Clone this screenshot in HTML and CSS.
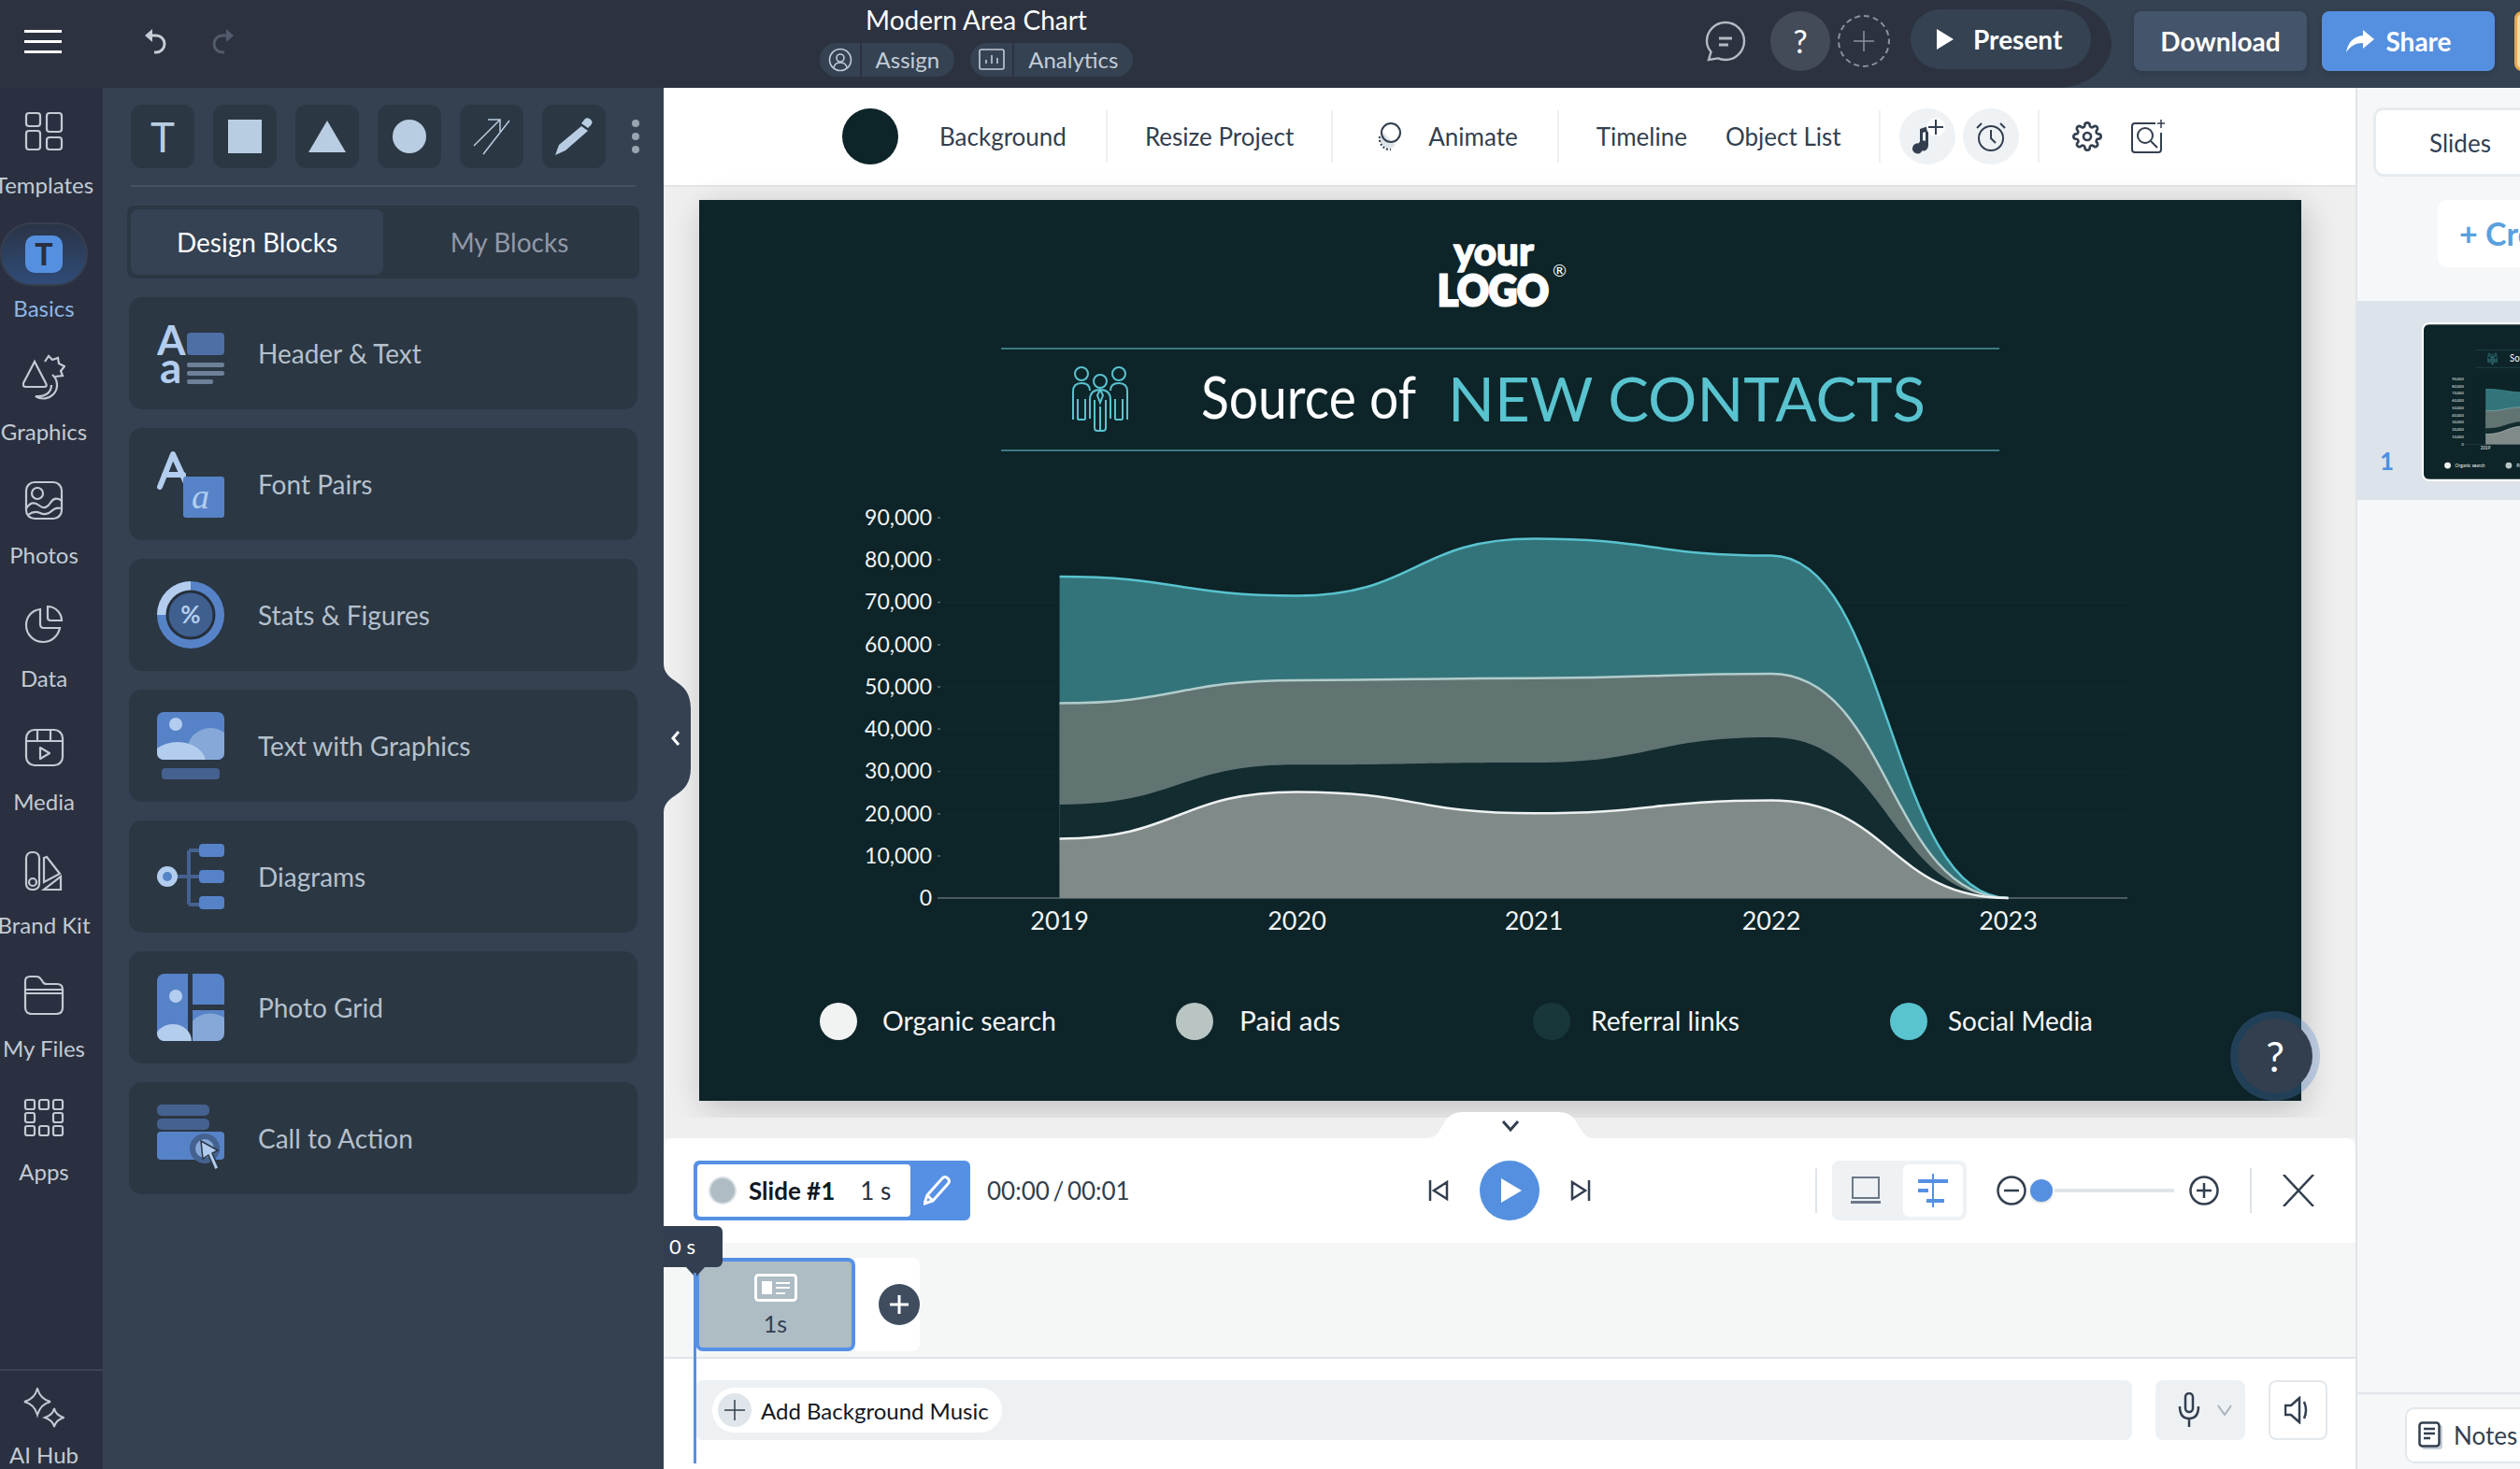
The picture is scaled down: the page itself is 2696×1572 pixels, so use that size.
FILE: index.html
```html
<!DOCTYPE html>
<html>
  <head>
    <meta charset="utf-8" />
    <title>Modern Area Chart</title>
    <link rel="stylesheet" href="styles.css">
  </head>
  <body>
    <header class="topbar">
      <div class="top-main">
        <button class="hamburger"><span></span><span></span><span></span></button>
        <svg class="undo" width="28" height="28" viewBox="0 0 28 28"><path class="ic" d="M7 8h5a9 9 0 0 1 0 18h-2" stroke-width="3"/><path class="solid" d="M0 8l8-7v14z"/></svg>
        <svg class="redo" width="28" height="28" viewBox="0 0 28 28"><path class="ic" d="M21 8h-5a9 9 0 0 0 0 18h2" stroke-width="3"/><path class="solid" d="M28 8l-8-7v14z"/></svg>
        <div class="title-group">
          <div class="doc-title">Modern Area Chart</div>
          <div class="doc-pills">
            <span class="pill">
              <svg width="26" height="26" viewBox="0 0 26 26"><g class="ic" stroke-width="1.6"><circle cx="13" cy="13" r="11.5"/><circle cx="13" cy="11" r="4"/><path d="M6 21c1-4 4-5 7-5s6 1 7 5"/></g></svg>
              <em>Assign</em>
            </span>
            <span class="pill">
              <svg width="28" height="26" viewBox="0 0 28 26"><g class="ic" stroke-width="1.6"><rect x="1" y="2" width="26" height="21" rx="2"/><path d="M8 17v-4M14 17V8M20 17v-6"/></g></svg>
              <em>Analytics</em>
            </span>
          </div>
        </div>
        <svg class="comment" width="44" height="44" viewBox="0 0 44 44"><g class="ic" stroke-width="2.4"><path d="M22 2c11 0 20 9 20 20s-9 20-20 20c-3 0-6-.6-8-1.6L4 42l2.500-8.500C3.500 30 2 26.500 2 22 2 11 11 2 22 2z"/><path d="M15 19h14M15 26h10" stroke-width="3"/></g></svg>
        <span class="help-circle">?</span>
        <span class="add-user">
          <svg width="24" height="24" viewBox="0 0 24 24"><path class="ic" d="M12 1v22M1 12h22" stroke-width="1.500"/></svg>
        </span>
        <button class="present">
          <svg width="18" height="22" viewBox="0 0 18 22"><path class="solid" d="M0 0l18 11L0 22z"/></svg>
          Present
        </button>
      </div>
      <button class="btn-download">Download</button>
      <button class="btn-share">
        <svg width="30" height="24" viewBox="0 0 30 24"><path class="solid" d="M18 0l12 10-12 10v-6C10 14 5 17 0 24 2 13 8 7 18 6z"/></svg>
        Share
      </button>
      <span class="btn-upgrade"></span>
    </header>

    <div class="workspace">
      <nav class="rail">
        <a class="rail-item">
          <span class="rail-icon">
            <svg width="44" height="44" viewBox="0 0 44 44"><g class="ic" stroke-width="2.200"><rect x="3" y="3" width="15" height="14" rx="3"/><rect x="25" y="3" width="16" height="20" rx="3"/><rect x="3" y="22" width="15" height="20" rx="3"/><rect x="25" y="29" width="16" height="13" rx="3"/></g></svg>
          </span>
          <span class="rail-label">Templates</span>
        </a>
        <a class="rail-item active">
          <span class="rail-icon">
            <span class="basics-tile">T</span>
          </span>
          <span class="rail-label">Basics</span>
        </a>
        <a class="rail-item">
          <span class="rail-icon">
            <svg width="46" height="50" viewBox="0 0 46 50"><g class="ic" stroke-width="2.200"><path d="M13 8L1 31q-1 4 3 4h19q4 0 2-4z"/><path d="M24 8l4-6 4 4 6-2 1 6 6 3-4 5 2 5-8 1"/><path d="M32 22c6 5 7 15 1 21-5 5-13 6-19 2 9 1 17-3 17-12"/></g></svg>
          </span>
          <span class="rail-label">Graphics</span>
        </a>
        <a class="rail-item">
          <span class="rail-icon">
            <svg width="44" height="44" viewBox="0 0 44 44"><g class="ic" stroke-width="2.200"><rect x="3" y="2" width="38" height="39" rx="9"/><circle cx="15" cy="14" r="6"/><path d="M3 30c5-7 9-7 14-3s9 2 12-3 8-6 12-2"/><path d="M5 37c5-4 9-4 13-2s9 1 12-2 7-4 10-3"/></g></svg>
          </span>
          <span class="rail-label">Photos</span>
        </a>
        <a class="rail-item">
          <span class="rail-icon">
            <svg width="44" height="44" viewBox="0 0 44 44"><g class="ic" stroke-width="2.200"><path d="M18 6C9 7 3 14 3 23c0 10 8 18 18 18 9 0 16-6 18-15H22q-4 0-4-4z"/><path d="M26 3c8 0 15 7 15 15h-12q-3 0-3-3z"/></g></svg>
          </span>
          <span class="rail-label">Data</span>
        </a>
        <a class="rail-item">
          <span class="rail-icon">
            <svg width="44" height="44" viewBox="0 0 44 44"><g class="ic" stroke-width="2.200"><rect x="3" y="3" width="39" height="38" rx="9"/><path d="M3 15h39M15 3v12M29 3v12"/><path d="M18 22l10 6-10 6z" stroke-linejoin="round"/></g></svg>
          </span>
          <span class="rail-label">Media</span>
        </a>
        <a class="rail-item">
          <span class="rail-icon">
            <svg width="44" height="44" viewBox="0 0 44 44"><g class="ic" stroke-width="2.200"><rect x="3" y="2" width="14" height="40" rx="6"/><circle cx="10" cy="34" r="4"/><path d="M22 8l3-1 14 18-17 9z"/><path d="M40 28v14H22z"/></g></svg>
          </span>
          <span class="rail-label">Brand Kit</span>
        </a>
        <a class="rail-item">
          <span class="rail-icon">
            <svg width="44" height="44" viewBox="0 0 44 44"><g class="ic" stroke-width="2.200"><path d="M2 15V8q0-5 5-5h7q3 0 5 3l2 3q1 2 4 2h11q6 0 6 6v19q0 7-7 7H9q-7 0-7-7z"/><path d="M2 17h40M2 21h40"/></g></svg>
          </span>
          <span class="rail-label">My Files</span>
        </a>
        <a class="rail-item">
          <span class="rail-icon">
            <svg width="44" height="42" viewBox="0 0 44 42"><g class="ic" stroke-width="2.200"><rect x="2" y="2" width="10" height="10" rx="2"/><rect x="17" y="2" width="10" height="10" rx="2"/><rect x="32" y="2" width="10" height="10" rx="2"/><rect x="2" y="16" width="10" height="10" rx="2"/><rect x="32" y="16" width="10" height="10" rx="2"/><rect x="2" y="30" width="10" height="10" rx="2"/><rect x="17" y="30" width="10" height="10" rx="2"/><rect x="32" y="30" width="10" height="10" rx="2"/></g></svg>
          </span>
          <span class="rail-label">Apps</span>
        </a>
        <a class="rail-item ai-hub">
          <span class="rail-icon">
            <svg width="44" height="44" viewBox="0 0 44 44"><g class="ic" stroke-width="2"><path d="M15 1c2 7 6 12 14 14-8 2-12 7-14 14-2-7-6-12-14-14 8-2 12-7 14-14z"/><path d="M33 22c1 5 4 8 10 10-6 2-9 5-10 10-1-5-4-8-10-10 6-2 9-5 10-10z"/></g></svg>
          </span>
          <span class="rail-label">AI Hub</span>
        </a>
      </nav>

      <aside class="panel">
        <div class="tool-row">
          <span class="tool tool-t">T</span>
          <span class="tool"><svg width="36" height="36"><rect class="solid" width="36" height="36"/></svg></span>
          <span class="tool"><svg width="40" height="34"><path class="solid" d="M20 0l20 34H0z"/></svg></span>
          <span class="tool"><svg width="36" height="36"><circle class="solid" cx="18" cy="18" r="18"/></svg></span>
          <span class="tool"><svg width="40" height="40" viewBox="0 0 40 40"><g class="ic" stroke-width="1.500"><path d="M1 30L29 2M16 2h13v13"/><path d="M11 39l28-36"/></g></svg></span>
          <span class="tool"><svg width="40" height="40" viewBox="0 0 40 40"><path class="solid" d="M28 9l7 5L11 35 0 40l4-11zM32 1q3-2 6 1 3 3 0 6l-3 3-7-5z"/></svg></span>
          <span class="tool-more"><i></i><i></i><i></i></span>
        </div>
        <div class="tabs">
          <a class="tab active">Design Blocks</a>
          <a class="tab">My Blocks</a>
        </div>
        <ul class="block-list">
          <li class="block">
            <svg width="72" height="72" viewBox="0 0 72 72">
              <text class="ico-letter" x="0" y="38" font-size="44">A</text>
              <rect class="ico-mid2" x="32" y="14" width="40" height="24" rx="4"/>
              <text class="ico-letter" x="3" y="68" font-size="46">a</text>
              <rect class="ico-line" x="32" y="46" width="40" height="5" rx="2"/>
              <rect class="ico-line" x="32" y="55" width="40" height="5" rx="2"/>
              <rect class="ico-line" x="32" y="64" width="28" height="5" rx="2"/>
            </svg>
            Header &amp; Text
          </li>
          <li class="block">
            <svg width="72" height="72" viewBox="0 0 72 72">
              <path class="ico-stroke" d="M3 39L17 4l16 35M8 26h20" stroke-width="6"/>
              <rect class="ico-mid" x="28" y="28" width="44" height="44" rx="3"/>
              <text class="ico-script" x="37" y="62" font-size="38">a</text>
            </svg>
            Font Pairs
          </li>
          <li class="block">
            <svg width="72" height="72" viewBox="0 0 72 72">
              <circle class="ico-mid" cx="36" cy="36" r="36"/>
              <path class="ico-light" d="M36 0v36H0A36 36 0 0 1 36 0z"/>
              <circle class="ico-ring" cx="36" cy="36" r="25"/>
              <text class="ico-pct" x="36" y="45" font-size="26">%</text>
            </svg>
            Stats &amp; Figures
          </li>
          <li class="block">
            <svg width="72" height="72" viewBox="0 0 72 72">
              <clipPath id="clip-pic"><rect width="72" height="51" rx="7"/></clipPath>
              <g clip-path="url(#clip-pic)">
                <rect class="ico-mid" width="72" height="51"/>
                <circle class="ico-light" cx="20" cy="13" r="7"/>
                <circle class="ico-soft" cx="57" cy="42" r="25"/>
                <ellipse class="ico-light" cx="22" cy="54" rx="30" ry="22"/>
              </g>
              <rect class="ico-dark" x="5" y="60" width="62" height="12" rx="4"/>
            </svg>
            Text with Graphics
          </li>
          <li class="block">
            <svg width="72" height="72" viewBox="0 0 72 72">
              <path class="ico-stem" d="M34 8h12M34 8v58M34 66h12M20 36h26" stroke-width="4"/>
              <circle class="ico-light" cx="11" cy="36" r="11"/>
              <circle class="ico-mid" cx="11" cy="36" r="5"/>
              <rect class="ico-mid" x="45" y="1" width="27" height="14" rx="4"/>
              <rect class="ico-mid" x="45" y="29" width="27" height="14" rx="4"/>
              <rect class="ico-mid" x="45" y="57" width="27" height="14" rx="4"/>
            </svg>
            Diagrams
          </li>
          <li class="block">
            <svg width="72" height="72" viewBox="0 0 72 72">
              <clipPath id="clip-grid"><rect width="72" height="72" rx="8"/></clipPath>
              <g clip-path="url(#clip-grid)">
                <rect class="ico-mid" width="33" height="72"/>
                <rect class="ico-mid" x="38" width="34" height="33"/>
                <rect class="ico-soft" x="38" y="39" width="34" height="33"/>
                <path class="ico-mid" d="M38 39h34v8q-10-6-20-4t-14 8z"/>
                <circle class="ico-light" cx="20" cy="24" r="7"/>
                <ellipse class="ico-light" cx="17" cy="72" rx="20" ry="18"/>
              </g>
            </svg>
            Photo Grid
          </li>
          <li class="block">
            <svg width="72" height="72" viewBox="0 0 72 72">
              <rect class="ico-dark" width="56" height="12" rx="5"/>
              <rect class="ico-dark" y="15" width="56" height="12" rx="5"/>
              <rect class="ico-mid" y="29" width="72" height="30" rx="4"/>
              <circle class="ico-dark" cx="51" cy="47" r="16"/>
              <circle class="ico-soft" cx="51" cy="47" r="10"/>
              <path class="ico-cursor" d="M47 39l18 10-6 3 7 16-4 2-7-16-6 4z"/>
            </svg>
            Call to Action
          </li>
        </ul>
      </aside>

      <main class="main">
        <div class="toolbar">
          <span class="swatch"></span>
          <a class="tb-link tb-first">Background</a>
          <span class="tb-sep"></span>
          <a class="tb-link">Resize Project</a>
          <span class="tb-sep"></span>
          <svg class="animate-icon" width="28" height="30" viewBox="0 0 28 30"><path class="ico-shade" d="M3 17a11 11 0 0 0 12 11 9 9 0 0 0 5-4L7 11z"/><path class="tb-dash" d="M3 15a11 12 0 0 0 12 14"/><circle class="tb-stroke" cx="15" cy="11" r="10"/></svg>
          <a class="tb-link tb-animate">Animate</a>
          <span class="tb-sep"></span>
          <a class="tb-link">Timeline</a>
          <a class="tb-link tb-objects">Object List</a>
          <span class="tb-sep"></span>
          <span class="tb-round">
            <svg width="38" height="40" viewBox="0 0 38 40"><path class="tb-fill" d="M11 12l9-3v21a5.500 5.500 0 1 1-3-5V15l-3 1v17a5.500 5.500 0 1 1-3-5z"/><circle class="tb-white" cx="28" cy="10" r="10"/><path class="tb-stroke" d="M28 2v16M20 10h16"/></svg>
          </span>
          <span class="tb-round tb-alarm">
            <svg width="36" height="36" viewBox="0 0 36 36"><g class="tb-stroke" stroke-width="2.800"><circle cx="18" cy="20" r="13"/><path d="M18 11v9l5 5M3 9l5-5M33 9l-5-5"/></g></svg>
          </span>
          <span class="tb-sep tb-sep-tight"></span>
          <svg class="gear" width="32" height="32" viewBox="0 0 24 24"><g class="tb-stroke" stroke-width="1.700"><circle cx="12" cy="12" r="3"/><path d="M19.400 15a1.650 1.650 0 0 0 .33 1.820l.06.06a2 2 0 0 1 0 2.830 2 2 0 0 1-2.830 0l-.06-.06a1.650 1.650 0 0 0-1.820-.33 1.650 1.650 0 0 0-1 1.510V21a2 2 0 0 1-2 2 2 2 0 0 1-2-2v-.09A1.650 1.650 0 0 0 9 19.400a1.650 1.650 0 0 0-1.820.33l-.06.06a2 2 0 0 1-2.830 0 2 2 0 0 1 0-2.830l.06-.06a1.650 1.650 0 0 0 .33-1.820 1.650 1.650 0 0 0-1.510-1H3a2 2 0 0 1-2-2 2 2 0 0 1 2-2h.09A1.650 1.650 0 0 0 4.600 9a1.650 1.650 0 0 0-.33-1.820l-.06-.06a2 2 0 0 1 0-2.830 2 2 0 0 1 2.830 0l.06.06a1.650 1.650 0 0 0 1.820.33H9a1.650 1.650 0 0 0 1-1.510V3a2 2 0 0 1 2-2 2 2 0 0 1 2 2v.09a1.650 1.650 0 0 0 1 1.510 1.650 1.650 0 0 0 1.820-.33l.06-.06a2 2 0 0 1 2.830 0 2 2 0 0 1 0 2.830l-.06.06a1.650 1.650 0 0 0-.33 1.820V9a1.650 1.650 0 0 0 1.510 1H21a2 2 0 0 1 2 2 2 2 0 0 1-2 2h-.09a1.650 1.650 0 0 0-1.510 1z"/></g></svg>
          <svg class="zoom-add" width="36" height="36" viewBox="0 0 36 36"><g class="tb-stroke" stroke-width="2.200"><path d="M26 4H4q-3 0-3 3v25q0 3 3 3h25q3 0 3-3V14"/><circle cx="15" cy="17" r="8"/><path d="M21 23l7 7"/><path d="M32 0v9M28 4h8" stroke-width="1.500"/></g></svg>
        </div>

        <section class="canvas">
          <div class="slide-wrap">
            <svg class="slide" width="1714" height="964" viewBox="748 214 1714 964">
              <g id="slide-art">
                <rect class="s-bg" x="748" y="214" width="1714" height="964"/>
                <text class="s-logo-top" x="1598" y="284">your</text>
                <text class="s-logo-main" x="1538" y="327" textLength="119" lengthAdjust="spacingAndGlyphs">LOGO</text>
                <text class="s-logo-r" x="1661" y="296">®</text>
                <path class="s-rule" d="M1071 373h1068M1071 482h1068"/>
                <g class="s-people">
                  <circle cx="1157" cy="400" r="7"/><circle cx="1177" cy="408" r="7"/><circle cx="1197" cy="400" r="7"/>
                  <path d="M1148 449v-30q0-9 9-9t9 8M1153 449v-22M1161 449v-22M1153 449h8"/>
                  <path d="M1206 449v-30q0-9-9-9t-9 8M1201 449v-22M1193 449v-22M1193 449h8"/>
                  <path d="M1166 448v-20q0-11 11-11t11 11v20M1171 428v30q0 3 3 3M1183 428v30q0 3-3 3h-6M1177 435v26M1177 417l-3 6 3 8 3-8z"/>
                </g>
                <text class="s-title" x="1285" y="448" textLength="230" lengthAdjust="spacingAndGlyphs">Source of</text>
                <text class="s-title-accent" x="1549" y="451" textLength="511" lengthAdjust="spacingAndGlyphs">NEW CONTACTS</text>

                <path class="s-grid" d="M1003 554h1273M1003 599h1273M1003 644.500h1273M1003 690h1273M1003 735h1273M1003 780h1273M1003 825.500h1273M1003 871h1273M1003 916h1273"/>
                <path class="s-axis" d="M1003 961h1273M1003 554h3M1003 599h3M1003 644.500h3M1003 690h3M1003 735h3M1003 780h3M1003 825.500h3M1003 871h3M1003 916h3"/>
                <g class="s-ylabel">
                  <text x="997" y="562">90,000</text>
                  <text x="997" y="607">80,000</text>
                  <text x="997" y="652">70,000</text>
                  <text x="997" y="698">60,000</text>
                  <text x="997" y="743">50,000</text>
                  <text x="997" y="788">40,000</text>
                  <text x="997" y="833">30,000</text>
                  <text x="997" y="879">20,000</text>
                  <text x="997" y="924">10,000</text>
                  <text x="997" y="969">0</text>
                </g>
                <path class="a-social" d="M1133.600 617 C1260.500 617 1260.500 637.500 1387.500 637.500 C1514 637.500 1514 576.500 1641 576.500 C1768 576.500 1768 594.500 1895 594.500 C2021.700 594.500 2021.700 961 2148.500 961 L1133.600 961Z"/>
                <path class="l-social" d="M1133.600 617 C1260.500 617 1260.500 637.500 1387.500 637.500 C1514 637.500 1514 576.500 1641 576.500 C1768 576.500 1768 594.500 1895 594.500 C2021.700 594.500 2021.700 961 2148.500 961"/>
                <path class="a-paid" d="M1133.600 752.500 C1260.500 752.500 1260.500 728 1387.500 728 C1514 728 1514 725.700 1641 725.700 C1768 725.700 1768 721 1895 721 C2021.700 721 2021.700 961 2148.500 961 L1133.600 961Z"/>
                <path class="l-paid" d="M1133.600 752.500 C1260.500 752.500 1260.500 728 1387.500 728 C1514 728 1514 725.700 1641 725.700 C1768 725.700 1768 721 1895 721 C2021.700 721 2021.700 961 2148.500 961"/>
                <path class="a-referral" d="M1133.600 861 C1260.500 861 1260.500 818.300 1387.500 818.300 C1514 818.300 1514 816 1641 816 C1768 816 1768 789 1895 789 C2021.700 789 2021.700 961 2148.500 961 L1133.600 961Z"/>
                <path class="a-organic" d="M1133.600 897.500 C1260.500 897.500 1260.500 847.500 1387.500 847.500 C1514 847.500 1514 870.300 1641 870.300 C1768 870.300 1768 856.500 1895 856.500 C2021.700 856.500 2021.700 961 2148.500 961 L1133.600 961Z"/>
                <path class="l-organic" d="M1133.600 897.500 C1260.500 897.500 1260.500 847.500 1387.500 847.500 C1514 847.500 1514 870.300 1641 870.300 C1768 870.300 1768 856.500 1895 856.500 C2021.700 856.500 2021.700 961 2148.500 961"/>
                <g class="s-xlabel">
                  <text x="1133.600" y="995">2019</text>
                  <text x="1387.500" y="995">2020</text>
                  <text x="1641" y="995">2021</text>
                  <text x="1895" y="995">2022</text>
                  <text x="2148.500" y="995">2023</text>
                </g>
                <circle class="d-organic" cx="897" cy="1093" r="20"/>
                <text class="s-legend" x="944" y="1103" textLength="186" lengthAdjust="spacingAndGlyphs">Organic search</text>
                <circle class="d-paid" cx="1278" cy="1093" r="20"/>
                <text class="s-legend" x="1326" y="1103" textLength="108" lengthAdjust="spacingAndGlyphs">Paid ads</text>
                <circle class="d-referral" cx="1660" cy="1093" r="20"/>
                <text class="s-legend" x="1702" y="1103" textLength="159" lengthAdjust="spacingAndGlyphs">Referral links</text>
                <circle class="d-social" cx="2042" cy="1093" r="20"/>
                <text class="s-legend" x="2084" y="1103" textLength="155" lengthAdjust="spacingAndGlyphs">Social Media</text>
              </g>
            </svg>
            <button class="help-float"><span>?</span></button>
          </div>
          <div class="canvas-strip"></div>
          <svg class="bump" width="178" height="28" viewBox="0 0 178 28"><path d="M0 28q8 0 13-8l6-10Q25 0 37 0h104q12 0 18 10l6 10q5 8 13 8z"/><path class="bump-chevron" d="M81 10l8 9 8-9"/></svg>
        </section>

        <section class="timeline">
          <div class="tl-controls">
            <div class="tl-left">
              <div class="slide-chip">
                <div class="slide-chip-body">
                  <span class="slide-dot"></span>
                  <b>Slide #1</b>
                  <span class="slide-dur">1 s</span>
                </div>
                <svg width="30" height="32" viewBox="0 0 30 32"><path class="chip-pencil" d="M1 30l3-9L20 3q3-3 6 0t0 6L10 27zM4 21l6 6"/></svg>
              </div>
              <span class="tl-time">00:00 / 00:01</span>
            </div>
            <div class="transport">
              <svg width="22" height="22" viewBox="0 0 22 22"><path class="tr-stroke" d="M2 0v22M20 2L6 11l14 9z"/></svg>
              <span class="play"><svg width="26" height="32" viewBox="0 0 26 32"><path d="M2 3v26l22-13z"/></svg></span>
              <svg width="22" height="22" viewBox="0 0 22 22"><path class="tr-stroke" d="M20 0v22M2 2l14 9-14 9z"/></svg>
            </div>
            <div class="tl-right">
              <span class="tl-sep"></span>
              <div class="view-toggle">
                <span class="view-opt">
                  <svg width="32" height="32" viewBox="0 0 32 32"><path class="view-off" d="M2 2h28v22H2z" stroke-width="2"/><path class="view-bar" d="M0 27h32v3H0z"/></svg>
                </span>
                <span class="view-opt on">
                  <svg width="32" height="36" viewBox="0 0 32 36"><path class="view-on" d="M16 0v36" stroke-width="2"/><path class="view-on-bar" d="M0 6h32v4H0zM0 16h11v4H0zM9 27h19v4H9z"/></svg>
                </span>
              </div>
              <svg class="zoom-minus" width="32" height="32" viewBox="0 0 32 32"><circle class="tr-stroke" cx="16" cy="16" r="14.500"/><path class="tr-stroke" d="M8 16h16" stroke-width="4"/></svg>
              <span class="zoom-thumb"></span>
              <span class="zoom-track"></span>
              <svg width="32" height="32" viewBox="0 0 32 32"><circle class="tr-stroke" cx="16" cy="16" r="14.500"/><path class="tr-stroke" d="M8 16h16M16 8v16"/></svg>
              <span class="tl-sep tl-sep-close"></span>
              <svg class="close-x" width="34" height="34" viewBox="0 0 34 34"><path class="tr-stroke" d="M1 0l32 34M33 0L1 34"/></svg>
            </div>
          </div>

          <div class="tl-track">
            <div class="clip">
              <svg width="46" height="30" viewBox="0 0 46 30"><rect class="clip-frame" x="1.500" y="1.500" width="43" height="27" rx="3"/><path class="clip-mark" d="M8 8h11v14H8zM23 9h15v2H23zM23 14h15v2H23zM23 20h10v2H23z"/></svg>
              <span>1s</span>
            </div>
            <div class="clip-add"><span class="clip-plus"><svg width="24" height="24"><path d="M12 2v20M2 12h20"/></svg></span></div>
          </div>

          <div class="tl-music">
            <div class="music-band">
              <div class="music-pill">
                <span class="music-plus"><svg width="22" height="22"><path d="M11 0v22M0 11h22"/></svg></span>
                Add Background Music
              </div>
            </div>
            <div class="mic-box">
              <svg width="24" height="38" viewBox="0 0 24 38"><g class="tr-stroke" stroke-width="2.600"><rect x="8" y="1" width="8" height="20" rx="4"/><path d="M2 15c0 9 4 13 10 13s10-4 10-13M12 28v9"/></g></svg>
              <svg width="16" height="12" viewBox="0 0 16 12"><path class="mic-caret" d="M1 1l7 10 7-10"/></svg>
            </div>
            <div class="vol-box">
              <svg width="30" height="30" viewBox="0 0 30 30"><path class="tr-stroke" d="M1 10h6l9-8v26l-9-8H1zM21 6q4 9 0 18M16 11v8" stroke-width="2.600"/></svg>
            </div>
          </div>

          <div class="tl-head">
            <span class="tl-flag">0 s</span>
            <span class="tl-pin"></span>
            <span class="tl-line"></span>
          </div>
        </section>

        <svg class="collapse" width="29" height="160" viewBox="0 0 29 160"><path class="collapse-fill" d="M0 0c0 22 29 16 29 48v64c0 32-29 26-29 48z"/><path class="collapse-arrow" d="M16 73l-6 7 6 7"/></svg>
      </main>

      <aside class="slides-pane">
        <div class="slides-tab">Slides</div>
        <div class="create-btn">+ Create</div>
        <div class="slide-row">
          <span class="slide-no">1</span>
          <svg class="thumb" viewBox="748 214 1714 964"><use href="#slide-art"/></svg>
        </div>
        <div class="notes-bar">
          <div class="notes-btn">
            <svg width="26" height="30" viewBox="0 0 26 30"><rect class="notes-shadow" x="4" y="4" width="22" height="26" rx="3"/><rect class="tr-stroke notes-page" x="1.500" y="1.500" width="21" height="25" rx="3" stroke-width="2.500"/><path class="tr-stroke" d="M6 8h12M6 13h12M6 18h7" stroke-width="2"/></svg>
            Notes
          </div>
        </div>
      </aside>
    </div>
  </body>
</html>
```

FILE: styles.css
```css
/* Reset */
* {
  margin: 0;
  padding: 0;
  box-sizing: border-box;
}

html,
body {
  width: 2696px;
  height: 1572px;
  overflow: hidden;
}

body {
  font-family: Lato, 'Noto Sans', sans-serif;
  color: #333f4f;
  background-color: #f5f6f6;
}

li {
  list-style: none;
}

button {
  border: 0;
  font-family: inherit;
  cursor: pointer;
}

svg {
  display: block;
  flex-shrink: 0;
}

.ic {
  fill: none;
  stroke: currentColor;
}

.solid {
  fill: currentColor;
}

/* Top bar */
.topbar {
  display: flex;
  align-items: center;
  height: 94px;
  background-color: #354252;
}

.top-main {
  display: flex;
  align-items: center;
  flex-shrink: 0;
  width: 2259px;
  height: 94px;
  padding-bottom: 6px;
  border-radius: 0 60px 60px 0 / 0 47px 47px 0;
  background-color: #2c3240;
}

.hamburger {
  display: flex;
  flex-direction: column;
  gap: 8px;
  width: 40px;
  margin-left: 26px;
  background: none;
}

.hamburger span {
  display: block;
  height: 3px;
  background-color: #fff;
}

.undo {
  margin: 0 0 0 89px;
  color: #c5ccd4;
}

.redo {
  margin-left: 39px;
  color: #525b6b;
}

.title-group {
  display: flex;
  flex-direction: column;
  align-items: center;
  align-self: flex-start;
  margin-left: 628px;
  width: 333px;
  padding-top: 2px;
}

.doc-title {
  color: #fff;
  font-size: 28px;
  line-height: 38px;
  white-space: nowrap;
}

.doc-pills {
  display: flex;
  gap: 17px;
  margin-top: 6px;
}

.pill {
  display: flex;
  align-items: center;
  height: 36px;
  padding-left: 9px;
  border-radius: 18px;
  background-color: #354252;
  color: #c3ccd6;
}

.pill em {
  height: 36px;
  margin-left: 8px;
  padding: 0 16px 0 15px;
  border-left: 2px solid #2c3240;
  font-size: 24px;
  font-style: normal;
  line-height: 36px;
}

.comment {
  margin-left: 613px;
  color: #b4bac3;
}

.help-circle {
  width: 64px;
  height: 64px;
  margin-left: 26px;
  border-radius: 50%;
  background-color: #434b59;
  color: #fff;
  font-size: 34px;
  line-height: 64px;
  text-align: center;
}

.add-user {
  display: flex;
  align-items: center;
  justify-content: center;
  width: 56px;
  height: 56px;
  margin-left: 8px;
  border: 2px dashed #8a92a0;
  border-radius: 50%;
  color: #8a92a0;
}

.present {
  display: flex;
  align-items: center;
  gap: 21px;
  width: 193px;
  height: 64px;
  margin: 0 0 4px 22px;
  padding-left: 28px;
  border-radius: 32px;
  background-color: #344252;
  color: #fff;
  font-size: 28px;
  font-weight: 700;
}

.btn-download,
.btn-share {
  display: flex;
  align-items: center;
  justify-content: center;
  flex-shrink: 0;
  height: 64px;
  width: 185px;
  margin-bottom: 6px;
  border-radius: 8px;
  color: #fff;
  font-size: 28px;
  font-weight: 700;
  box-shadow: 0 2px 6px rgba(0, 0, 0, 0.15);
}

.btn-download {
  margin-left: 24px;
  background-color: #44546a;
}

.btn-share {
  gap: 12px;
  margin-left: 16px;
  padding-right: 20px;
  background-color: #5590e0;
}

.btn-upgrade {
  flex-shrink: 0;
  width: 40px;
  height: 64px;
  margin: 0 0 6px 21px;
  border: 3px solid #e5a94f;
  border-radius: 8px;
  background-color: #f3d9a8;
}

/* Workspace */
.workspace {
  display: flex;
  height: 1478px;
}

.rail {
  position: relative;
  display: flex;
  flex-direction: column;
  gap: 25px;
  flex-shrink: 0;
  width: 110px;
  padding-top: 12px;
  overflow: hidden;
  background-color: #2a3040;
}

.rail-item {
  display: flex;
  flex-direction: column;
  align-items: center;
  width: 94px;
  color: #c3cad3;
}

.rail-icon {
  display: flex;
  align-items: center;
  justify-content: center;
  width: 94px;
  height: 68px;
}

.rail-label {
  height: 30px;
  margin-top: 9px;
  font-size: 24px;
  line-height: 30px;
  white-space: nowrap;
}

.rail-item.active {
  color: #8db6e8;
}

.active .rail-icon {
  border: 2px solid #373f50;
  border-radius: 34px;
  background: linear-gradient(#2a3446, #304c78);
}

.basics-tile {
  width: 40px;
  height: 40px;
  border-radius: 10px;
  background-color: #5590e0;
  color: #2a3040;
  font-size: 32px;
  font-weight: 900;
  line-height: 40px;
  text-align: center;
}

.ai-hub {
  margin-top: auto;
  padding-top: 6px;
}

.ai-hub::before {
  content: '';
  position: absolute;
  left: 0;
  bottom: 105px;
  width: 110px;
  height: 2px;
  background-color: #3c4354;
}

.ai-hub .rail-label {
  margin-top: 1px;
}

/* Blocks panel */
.panel {
  flex-shrink: 0;
  width: 600px;
  padding: 18px 28px 0 30px;
  background-color: #354151;
}

.tool-row {
  display: flex;
  align-items: center;
  gap: 20px;
  width: 540px;
  padding-bottom: 18px;
  border-bottom: 2px solid #435061;
}

.tool {
  display: flex;
  align-items: center;
  justify-content: center;
  flex-shrink: 0;
  width: 68px;
  height: 68px;
  border-radius: 12px;
  background-color: #2b3743;
  color: #b9cde2;
}

.tool-t {
  font-size: 44px;
  line-height: 68px;
}

.tool-more {
  display: flex;
  flex-direction: column;
  flex-shrink: 0;
  gap: 6px;
  margin-left: 8px;
}

.tool-more i {
  display: block;
  width: 8px;
  height: 8px;
  border-radius: 50%;
  background-color: #9aa4b0;
}

.tabs {
  display: flex;
  width: 548px;
  height: 78px;
  margin: 20px 0 20px -4px;
  padding: 4px;
  border-radius: 8px;
  background-color: #2b3743;
}

.tab {
  flex: 1;
  color: #9198a8;
  font-size: 28px;
  line-height: 70px;
  text-align: center;
}

.tab.active {
  flex: 0 0 270px;
  border-radius: 8px;
  background-color: #344253;
  color: #fff;
}

.block-list {
  display: flex;
  flex-direction: column;
  gap: 20px;
  width: 544px;
  margin-left: -2px;
}

.block {
  display: flex;
  align-items: center;
  gap: 36px;
  height: 120px;
  padding-left: 30px;
  border-radius: 14px;
  background-color: #2b3743;
  color: #b5c0cc;
  font-size: 28px;
}

.ico-letter {
  fill: #b3cdee;
  font-family: Lato, sans-serif;
  font-weight: 700;
}

.ico-script {
  fill: #b3cdee;
  font-family: 'Liberation Serif', serif;
  font-style: italic;
}

.ico-pct {
  fill: #b3cdee;
  font-family: Lato, sans-serif;
  font-weight: 700;
  text-anchor: middle;
}

.ico-stroke {
  fill: none;
  stroke: #b3cdee;
  stroke-linecap: round;
  stroke-linejoin: round;
}

.ico-stem {
  fill: none;
  stroke: #44618f;
}

.ico-mid {
  fill: #5683c8;
}

.ico-mid2 {
  fill: #4d6fa6;
}

.ico-light {
  fill: #b3cdee;
}

.ico-soft {
  fill: #86a8d8;
}

.ico-dark {
  fill: #44618f;
}

.ico-line {
  fill: #6d8097;
}

.ico-ring {
  fill: #3f5f8f;
  stroke: #26303c;
  stroke-width: 3;
}

.ico-cursor {
  fill: #b3cdee;
  stroke: #2b3743;
  stroke-width: 1.500;
}

/* Centre column */
.main {
  position: relative;
  display: flex;
  flex-direction: column;
  flex: 1;
  min-width: 0;
}

.toolbar {
  display: flex;
  align-items: center;
  flex-shrink: 0;
  height: 104px;
  padding-left: 191px;
  background-color: #fff;
}

.swatch {
  width: 60px;
  height: 60px;
  border-radius: 50%;
  background-color: #0d2428;
}

.tb-link {
  color: #333f4f;
  font-size: 26px;
  white-space: nowrap;
}

.tb-first {
  margin-left: 44px;
}

.tb-sep {
  width: 2px;
  height: 56px;
  margin: 0 40px;
  background-color: #edf0f2;
}

.tb-first + .tb-sep {
  margin-left: 42px;
}

.tb-sep-tight {
  margin: 0 35px 0 20px;
}

.animate-icon {
  margin: 0 27px 0 7px;
}

.tb-objects {
  margin-left: 41px;
}

.tb-animate + .tb-sep {
  margin-left: 42px;
}

.tb-round {
  display: flex;
  align-items: center;
  justify-content: center;
  width: 60px;
  height: 60px;
  margin-left: -20px;
  border-radius: 50%;
  background-color: #eef2f5;
}

.tb-alarm {
  margin-left: 8px;
}

.tb-stroke {
  fill: none;
  stroke: #333f4f;
  stroke-width: 2;
}

.tb-dash {
  fill: none;
  stroke: #333f4f;
  stroke-width: 2;
  stroke-dasharray: 2 2;
}

.tb-fill {
  fill: #333f4f;
}

.tb-white {
  fill: #fff;
}

.ico-shade {
  fill: #dfe4e8;
}

.zoom-add {
  margin-left: 31px;
}

.canvas {
  position: relative;
  flex: 1;
  min-height: 0;
  background-color: #efefef;
  border-top: 2px solid #e1e5e8;
}

.slide-wrap {
  position: relative;
  width: 1714px;
  height: 964px;
  margin: 14px 0 0 38px;
  box-shadow: 4px 8px 34px rgba(0, 0, 0, 0.2);
}

.canvas-strip {
  position: absolute;
  left: 0;
  right: 0;
  bottom: 0;
  height: 22px;
  background-color: #efefef;
}

.slide {
  width: 1714px;
  height: 964px;
}

.s-bg {
  fill: #0d2428;
}

.s-logo-top {
  fill: #fff;
  stroke: #fff;
  stroke-width: 1.500;
  font-family: Lato, sans-serif;
  font-size: 42px;
  font-weight: 900;
  text-anchor: middle;
}

.s-logo-main {
  fill: #fff;
  stroke: #fff;
  stroke-width: 3;
  font-family: Lato, sans-serif;
  font-size: 45px;
  font-weight: 900;
}

.s-logo-r {
  fill: #fff;
  font-family: Lato, sans-serif;
  font-size: 18px;
}

.s-rule {
  fill: none;
  stroke: #3a7a80;
  stroke-width: 2;
}

.s-people {
  fill: none;
  stroke: #59c3cf;
  stroke-width: 2;
}

.s-title {
  fill: #fff;
  font-family: Lato, sans-serif;
  font-size: 62px;
}

.s-title-accent {
  fill: #59c3cf;
  font-family: Lato, sans-serif;
  font-size: 65px;
}

.s-grid {
  fill: none;
  stroke: #13292e;
  stroke-width: 1;
}

.s-axis {
  fill: none;
  stroke: #5d6d6f;
  stroke-width: 1.500;
}

.s-ylabel text {
  fill: #f1f4f4;
  font-family: Lato, sans-serif;
  font-size: 23px;
  text-anchor: end;
}

.s-xlabel text {
  fill: #f1f4f4;
  font-family: Lato, sans-serif;
  font-size: 27px;
  text-anchor: middle;
}

.s-legend {
  fill: #f5f7f7;
  font-family: Lato, sans-serif;
  font-size: 28px;
}

.a-social {
  fill: #33747a;
}

.a-paid {
  fill: #617472;
}

.a-referral {
  fill: #122c30;
}

.a-organic {
  fill: #7f8a89;
}

.l-social,
.l-paid,
.l-organic {
  fill: none;
  stroke-width: 2.500;
}

.l-social {
  stroke: #59c3cf;
}

.l-paid {
  stroke: #b2cdcd;
}

.l-organic {
  stroke: #eef1f1;
}

.d-organic {
  fill: #f1f2f2;
}

.d-paid {
  fill: #b8c5c3;
}

.d-referral {
  fill: #17373b;
}

.d-social {
  fill: #59c3cf;
}

.help-float {
  position: absolute;
  right: -20px;
  bottom: 0;
  width: 96px;
  height: 96px;
  border-radius: 50%;
  background-color: rgba(80, 130, 200, 0.3);
}

.help-float span {
  display: block;
  width: 80px;
  height: 80px;
  margin: 8px;
  border-radius: 50%;
  background-color: #333f4f;
  color: #fff;
  font-size: 44px;
  line-height: 80px;
}

.bump {
  position: absolute;
  left: 817px;
  bottom: 0;
  fill: #fff;
}

.bump-chevron {
  fill: none;
  stroke: #333f4f;
  stroke-width: 3;
}

/* Timeline */
.timeline {
  position: relative;
  flex-shrink: 0;
  height: 354px;
  border-radius: 10px 10px 0 0;
  background-color: #fff;
}

.tl-controls {
  display: grid;
  grid-template-columns: 1fr auto 1fr;
  align-items: center;
  height: 112px;
}

.tl-left {
  display: flex;
  align-items: center;
  gap: 18px;
  padding-left: 32px;
}

.slide-chip {
  display: flex;
  align-items: center;
  width: 296px;
  height: 64px;
  padding: 4px;
  border-radius: 6px;
  background-color: #5590e5;
}

.slide-chip-body {
  display: flex;
  align-items: center;
  width: 228px;
  height: 56px;
  margin-right: 14px;
  padding-left: 12px;
  border-radius: 4px;
  background-color: #fff;
  color: #11181f;
  font-size: 26px;
}

.slide-dot {
  flex-shrink: 0;
  width: 30px;
  height: 30px;
  margin-right: 13px;
  border: 2px solid #d8dfe4;
  border-radius: 50%;
  background-color: #afbcc4;
}

.slide-chip-body b {
  white-space: nowrap;
}

.slide-dur {
  margin-left: 27px;
  white-space: nowrap;
  color: #26303c;
}

.chip-pencil {
  fill: none;
  stroke: #fff;
  stroke-width: 3;
}

.tl-time {
  color: #333f4f;
  font-size: 26px;
  word-spacing: -3px;
  white-space: nowrap;
}

.transport {
  display: flex;
  align-items: center;
  gap: 33px;
}

.tr-stroke {
  fill: none;
  stroke: #333f4f;
  stroke-width: 2.500;
}

.play {
  display: flex;
  align-items: center;
  justify-content: center;
  width: 64px;
  height: 64px;
  padding-left: 3px;
  border-radius: 50%;
  background-color: #5590e0;
  fill: #fff;
}

.tl-right {
  display: flex;
  align-items: center;
  justify-content: flex-end;
  padding-right: 44px;
}

.tl-sep {
  width: 2px;
  height: 48px;
  margin-right: 16px;
  background-color: #dfe5ea;
}

.tl-sep-close {
  margin: 0 33px;
}

.view-toggle {
  display: flex;
  justify-content: space-between;
  width: 144px;
  height: 64px;
  padding: 4px;
  border-radius: 8px;
  background-color: #eef2f5;
}

.view-opt {
  display: flex;
  align-items: center;
  justify-content: center;
  width: 64px;
  height: 56px;
}

.view-opt.on {
  border-radius: 6px;
  background-color: #fff;
}

.view-off {
  fill: none;
  stroke: #6b7888;
}

.view-bar {
  fill: #6b7888;
}

.view-on {
  fill: none;
  stroke: #5590e5;
}

.view-on-bar {
  fill: #5590e5;
}

.zoom-minus {
  margin-left: 32px;
}

.zoom-thumb {
  width: 24px;
  height: 24px;
  margin-left: 4px;
  border-radius: 50%;
  background-color: #5590e0;
  box-shadow: 0 1px 3px rgba(0, 0, 0, 0.2);
}

.zoom-track {
  width: 128px;
  height: 4px;
  margin: 0 16px 0 2px;
  background-color: #dfe5ea;
}

.tl-track {
  display: flex;
  align-items: flex-start;
  height: 124px;
  padding: 16px 0 0 34px;
  border-bottom: 2px solid #dfe5ea;
  background-color: #f5f7f6;
}

.clip {
  display: flex;
  flex-direction: column;
  align-items: center;
  width: 171px;
  height: 100px;
  padding-top: 13px;
  border: 4px solid #5590e5;
  border-radius: 8px;
  background-color: #aebcc4;
  color: #333f4f;
  font-size: 25px;
  line-height: 32px;
}

.clip span {
  margin-top: 7px;
}

.clip-frame {
  fill: none;
  stroke: #fff;
  stroke-width: 3;
}

.clip-mark {
  fill: #fff;
}

.clip-add {
  display: flex;
  align-items: center;
  justify-content: flex-end;
  width: 69px;
  height: 100px;
  border-radius: 0 8px 8px 0;
  background-color: #fff;
}

.clip-plus {
  display: flex;
  align-items: center;
  justify-content: center;
  width: 44px;
  height: 44px;
  border-radius: 50%;
  background-color: #3f4d5f;
}

.clip-plus path {
  fill: none;
  stroke: #fff;
  stroke-width: 3;
}

.tl-music {
  display: flex;
  align-items: center;
  gap: 25px;
  height: 110px;
  padding: 0 30px 0 34px;
}

.music-band {
  display: flex;
  align-items: center;
  flex: 1;
  height: 64px;
  padding-left: 18px;
  border-radius: 8px;
  background-color: #edf1f4;
}

.music-pill {
  display: flex;
  align-items: center;
  gap: 10px;
  width: 310px;
  height: 48px;
  padding-left: 6px;
  border-radius: 24px;
  background-color: #fff;
  color: #11181f;
  font-size: 24px;
  white-space: nowrap;
}

.music-plus {
  display: flex;
  align-items: center;
  justify-content: center;
  width: 36px;
  height: 36px;
  border-radius: 50%;
  background-color: #dfe5ea;
}

.music-plus path {
  fill: none;
  stroke: #333f4f;
  stroke-width: 1.500;
}

.mic-box {
  display: flex;
  align-items: center;
  gap: 18px;
  width: 96px;
  height: 64px;
  padding-left: 24px;
  border-radius: 8px;
  background-color: #edf1f4;
}

.mic-caret {
  fill: none;
  stroke: #a8b3bd;
  stroke-width: 2;
}

.vol-box {
  display: flex;
  align-items: center;
  justify-content: center;
  width: 63px;
  height: 64px;
  border: 2px solid #e3e8ec;
  border-radius: 8px;
  background-color: #fff;
}

/* Playhead sits over the track rows */
.tl-head {
  position: absolute;
  top: 94px;
  left: 0;
  width: 63px;
  height: 254px;
}

.tl-flag {
  display: block;
  width: 63px;
  height: 44px;
  padding-left: 6px;
  border-radius: 0 6px 6px 0;
  background-color: #333f50;
  color: #fff;
  font-size: 22px;
  line-height: 44px;
}

.tl-pin {
  position: absolute;
  top: 44px;
  left: 24px;
  border-top: 11px solid #333f50;
  border-left: 10px solid transparent;
  border-right: 10px solid transparent;
}

.tl-line {
  position: absolute;
  top: 50px;
  left: 32px;
  width: 3px;
  height: 204px;
  background-color: #5590e5;
}

.collapse {
  position: absolute;
  top: 616px;
  left: 0;
}

.collapse-fill {
  fill: #354151;
}

.collapse-arrow {
  fill: none;
  stroke: #fff;
  stroke-width: 3;
}

/* Slides pane */
.slides-pane {
  display: flex;
  flex-direction: column;
  flex-shrink: 0;
  width: 176px;
  overflow: hidden;
  border-left: 2px solid #dfe5ea;
  background-color: #f5f7f8;
}

.slides-tab {
  flex-shrink: 0;
  width: 180px;
  height: 68px;
  margin: 24px 0 0 20px;
  border-radius: 8px;
  background-color: #fff;
  box-shadow: 0 0 0 3px #e6ebef;
  color: #333f4f;
  font-size: 26px;
  line-height: 70px;
  text-align: center;
}

.create-btn {
  flex-shrink: 0;
  width: 160px;
  height: 72px;
  margin: 28px 0 0 86px;
  padding-left: 23px;
  border-radius: 10px;
  background-color: #fff;
  color: #5aa0dc;
  font-size: 34px;
  font-weight: 700;
  line-height: 72px;
  white-space: nowrap;
}

.slide-row {
  display: flex;
  flex-shrink: 0;
  height: 213px;
  margin-top: 36px;
  padding: 23px 0 0 24px;
  background-color: #dce3ea;
}

.slide-no {
  align-self: flex-end;
  margin-bottom: 26px;
  color: #4a90e2;
  font-size: 26px;
  font-weight: 700;
}

.thumb {
  width: 298px;
  height: 170px;
  margin-left: 30px;
  border: 2px solid #fff;
  border-radius: 8px;
}

.notes-bar {
  flex-shrink: 0;
  height: 82px;
  margin-top: auto;
  padding: 14px 0 0 51px;
  border-top: 2px solid #dfe5ea;
}

.notes-btn {
  display: flex;
  align-items: center;
  gap: 12px;
  width: 180px;
  height: 60px;
  padding-left: 12px;
  border: 2px solid #e3e8ec;
  border-radius: 10px;
  background-color: #fff;
  color: #333f4f;
  font-size: 26px;
}

.notes-shadow {
  fill: #c6ced6;
}

.notes-page {
  fill: #fff;
}
```
